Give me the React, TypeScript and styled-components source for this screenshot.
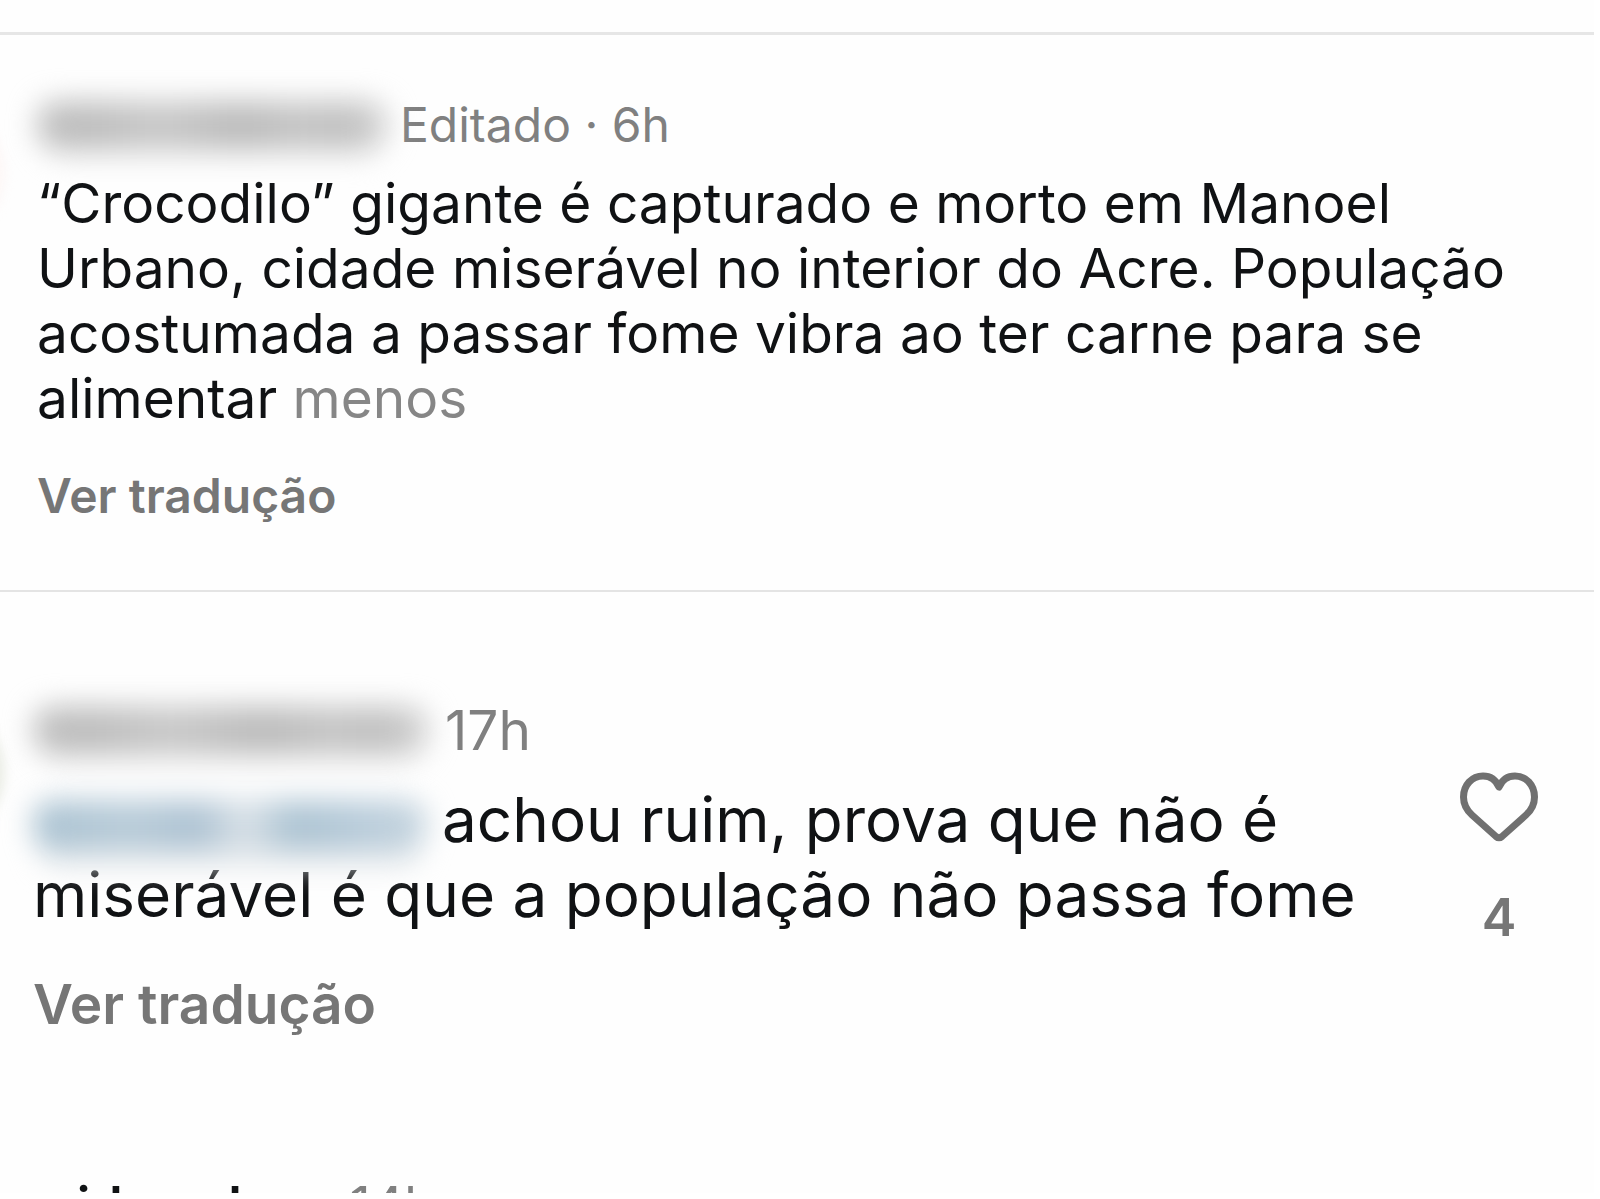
import React from 'react';
import styled, { createGlobalStyle } from 'styled-components';

const GlobalStyle = createGlobalStyle`
  * { box-sizing: border-box; }
  body {
    margin: 0;
    background: #ffffff;
    color: #101214;
    font-family: Inter, "Liberation Sans", sans-serif;
  }
  p, h2 { margin: 0; }
`;

const Page = styled.main`
  display: flex;
  flex-direction: column;
  height: calc(100vh - 6px);
  margin-right: 6px;
  padding-top: 32px;
  overflow: hidden;
  background: #fefefe;
`;

const Caption = styled.article`
  position: relative;
  flex: none;
  padding: 60px 36px 64px 37px;
  border-top: 3px solid #e6e6e6;
  border-bottom: 2px solid #e4e4e4;
`;

const Comment = styled.article`
  position: relative;
  flex: none;
  display: flex;
  align-items: flex-start;
  justify-content: space-between;
  padding: 108px 56px 0 33px;
`;

const NextComment = styled(Comment)`
  padding-top: 142px;
`;

const Content = styled.div`
  flex: 1;
`;

const AvatarEdge = styled.span<{ $top: number; $color: string }>`
  position: absolute;
  top: ${(p) => p.$top}px;
  left: -136px;
  width: 140px;
  height: 140px;
  border-radius: 50%;
  background: ${(p) => p.$color};
  filter: blur(6px);
`;

const Header = styled.header<{ $gap: number }>`
  display: flex;
  align-items: center;
  gap: ${(p) => p.$gap}px;
`;

const HiddenName = styled.span<{ $width: number }>`
  width: ${(p) => p.$width}px;
  height: 48px;
  border-radius: 20px;
  background: linear-gradient(90deg, #c2c2c2, #bebebe 14%, #c9c9c9 35%, #bcbcbc 58%, #c6c6c6 75%, #c1c1c1 88%, #d6d6d6);
  box-shadow: 0 20px 0 -12px #ececec;
  filter: blur(14px);
`;

const HiddenMention = styled.span`
  display: inline-block;
  width: 393px;
  height: 50px;
  margin-right: 16px;
  vertical-align: middle;
  border-radius: 20px;
  background: linear-gradient(90deg, #abc3d2, #b9ccd9 25%, #aec3d3 42%, #dae2e8 54%, #adc4d3 66%, #bacddb 85%, #c6d5df);
  box-shadow: 0 24px 0 -8px #e4e8eb;
  filter: blur(14px);
`;

const Meta = styled.span<{ $size: number }>`
  font-size: ${(p) => p.$size}px;
  line-height: 60px;
  color: #808080;
`;

const Text = styled.p<{ $size: number; $line: number; $top: number }>`
  margin-top: ${(p) => p.$top}px;
  font-size: ${(p) => p.$size}px;
  line-height: ${(p) => p.$line}px;
`;

const TextButton = styled.button`
  padding: 0;
  border: 0;
  background: none;
  font: inherit;
  color: #868686;
  cursor: pointer;
`;

const Translate = styled(TextButton)<{ $size: number; $top: number }>`
  display: block;
  margin-top: ${(p) => p.$top}px;
  font-size: ${(p) => p.$size}px;
  font-weight: 600;
  line-height: 60px;
  color: #767676;
`;

const Likes = styled.div`
  display: flex;
  flex-direction: column;
  align-items: center;
  gap: 46px;
  padding-top: 72px;
`;

const LikeButton = styled.button`
  padding: 0;
  border: 0;
  background: none;
  color: #707070;
  line-height: 0;
  cursor: pointer;
`;

const LikeCount = styled.span`
  font-size: 52px;
  font-weight: 600;
  line-height: 60px;
  color: #767676;
`;

const Author = styled.h2`
  font-size: 52px;
  font-weight: 600;
  line-height: 60px;
`;

function Heart() {
  return (
    <svg
      width="78"
      height="70"
      viewBox="0 0 78 70"
      fill="none"
      stroke="currentColor"
      strokeWidth="7"
      strokeLinejoin="round"
      aria-hidden="true"
    >
      <path d="M39 15 C36 8 31 4 23 4 C12 4 3.5 13 3.5 25 C3.5 33 7 38.5 12 43 L36 64.5 Q39 67 42 64.5 L66 43 C71 38.5 74.5 33 74.5 25 C74.5 13 66 4 55 4 C47 4 42 8 39 15 Z" />
    </svg>
  );
}

export default function App() {
  return (
    <>
      <GlobalStyle />
      <Page>
        <Caption>
          <AvatarEdge $top={68} $color="#fdf6f5" />
          <Header $gap={12}>
            <HiddenName $width={351} />
            <Meta $size={48}>Editado · 6h</Meta>
          </Header>
          <Text $size={55} $line={65} $top={16}>
            “Crocodilo” gigante é capturado e morto em Manoel Urbano, cidade miserável no interior do Acre. População
            acostumada a passar fome vibra ao ter carne para se alimentar <TextButton>menos</TextButton>
          </Text>
          <Translate $size={48} $top={35}>Ver tradução</Translate>
        </Caption>
        <Comment>
          <AvatarEdge $top={110} $color="#e8ebe2" />
          <Content>
            <Header $gap={16}>
              <HiddenName $width={396} />
              <Meta $size={55}>17h</Meta>
            </Header>
            <Text $size={62} $line={75} $top={22}>
              <HiddenMention />
              achou ruim, prova que não é miserável é que a população não passa fome
            </Text>
            <Translate $size={55} $top={42}>Ver tradução</Translate>
          </Content>
          <Likes>
            <LikeButton aria-label="Curtir">
              <Heart />
            </LikeButton>
            <LikeCount>4</LikeCount>
          </Likes>
        </Comment>
        <NextComment>
          <Header $gap={16}>
            <Author>wider_alana</Author>
            <Meta $size={52}>14h</Meta>
          </Header>
        </NextComment>
      </Page>
    </>
  );
}
